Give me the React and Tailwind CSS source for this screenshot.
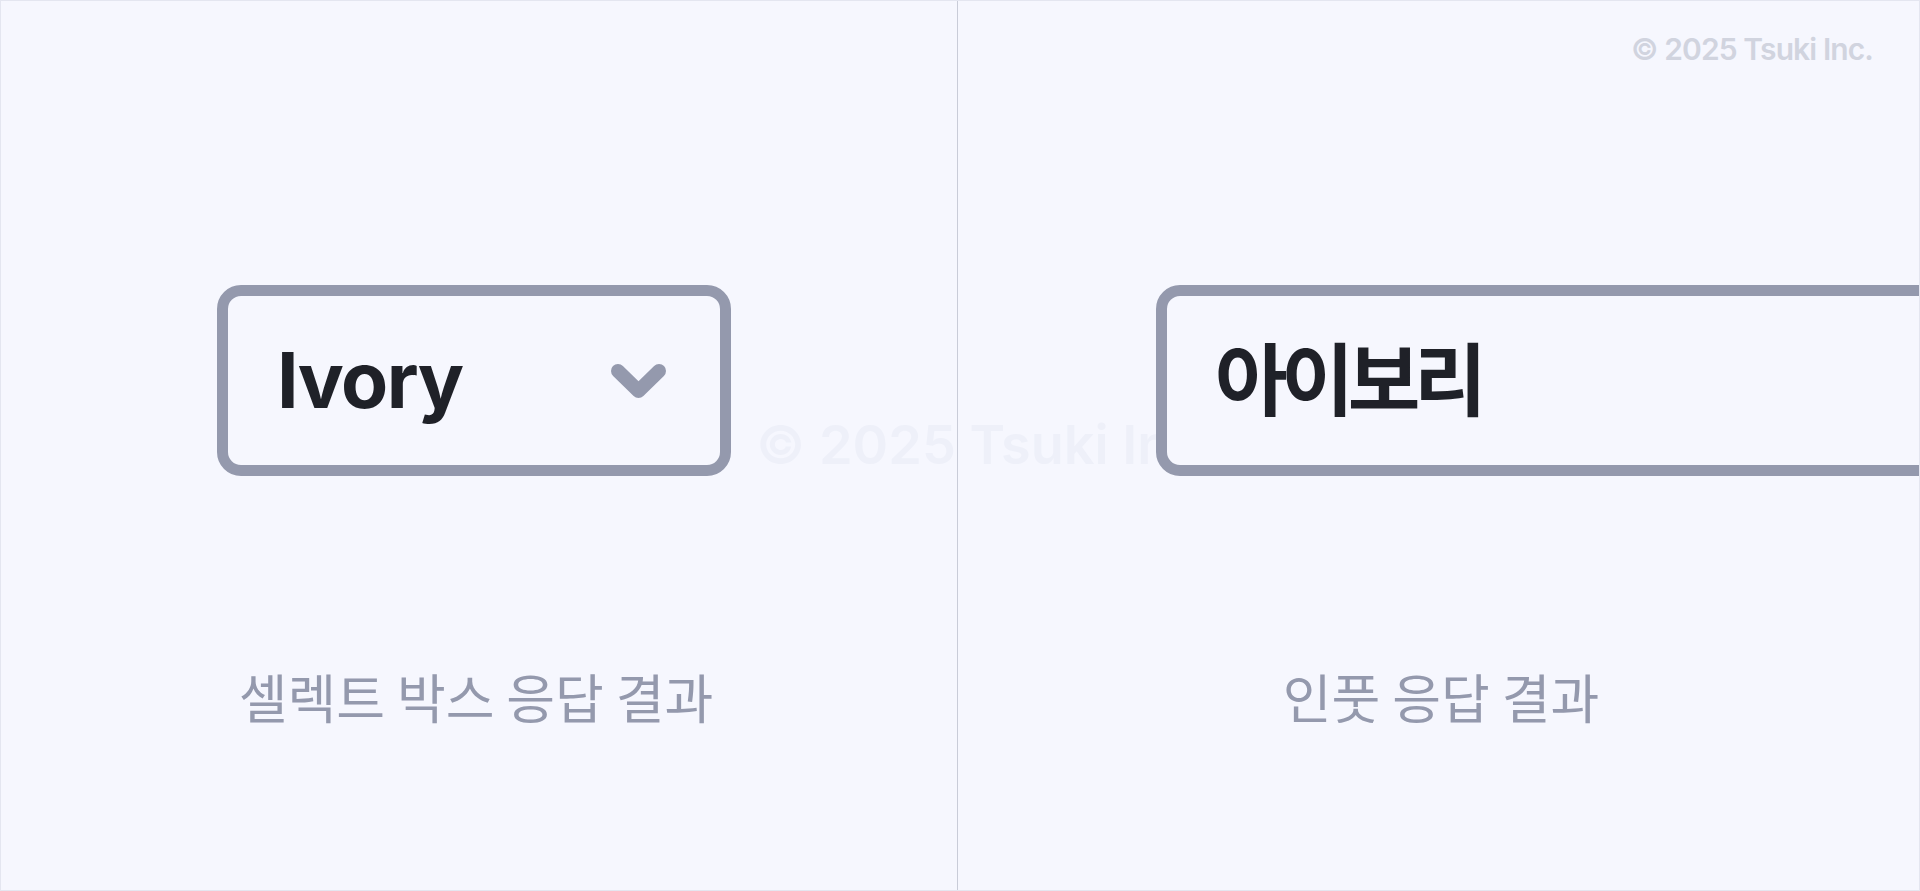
import React from 'react'

const Chevron = () => (
    <svg width="55" height="34" viewBox="0 0 55 34" fill="none">
        <path d="M7 7 L27.5 27 L48 7" stroke="#9499ad" strokeWidth="14" strokeLinecap="round" strokeLinejoin="round" />
    </svg>
)

const App = () => {
    return (
        <div className="relative flex w-[1920px] h-[891px] overflow-hidden bg-[#f6f7fe] border border-[#e4e6f0] font-['Inter','Noto_Sans_CJK_KR',sans-serif]">
            {/* ----- watermark ----- */}
            <p className="absolute left-[755px] top-[417px] text-[54px] leading-none font-semibold text-[#eef0f9] whitespace-nowrap">
                © 2025 Tsuki Inc.
            </p>

            {/* ----- Left: select ----- */}
            <div className="relative w-[957px] h-full border-r border-[#c9ccd8] flex flex-col pt-[284px]">
                <div className="ml-[216px] w-[514px] h-[191px] border-[11px] border-[#9499ad] rounded-[24px] bg-[#f6f7fe] flex items-center justify-between pl-[49px] pr-[54px]">
                    <span className="text-[77px] leading-none font-bold text-[#1f2128] tracking-[-0.02em]">Ivory</span>
                    <Chevron />
                </div>
                <p className="mt-[194px] text-center pr-[6px] text-[53px] leading-none font-['Noto_Sans_CJK_KR',sans-serif] text-[#9499ad]">
                    셀렉트 박스 응답 결과
                </p>
            </div>

            {/* ----- Right: input ----- */}
            <div className="relative flex-1 h-full overflow-hidden flex flex-col pt-[284px]">
                <div className="ml-[198px] w-[900px] h-[191px] border-[11px] border-[#9499ad] rounded-[24px] bg-[#f6f7fe] flex items-center pl-[48px] pb-[10px]">
                    <span className="text-[79px] leading-none font-bold tracking-[-0.08em] text-[#1f2128] font-['Noto_Sans_CJK_KR',sans-serif] whitespace-nowrap">
                        아이보리
                    </span>
                </div>
                <p className="mt-[194px] text-center pl-[5px] text-[53px] leading-none font-['Noto_Sans_CJK_KR',sans-serif] text-[#9499ad]">
                    인풋 응답 결과
                </p>
            </div>

            {/* ----- copyright ----- */}
            <p className="absolute right-[46px] top-[33px] text-[30px] leading-none font-semibold tracking-[-0.03em] text-[#d1d4df] whitespace-nowrap">
                © 2025 Tsuki Inc.
            </p>
        </div>
    )
}

export default App
